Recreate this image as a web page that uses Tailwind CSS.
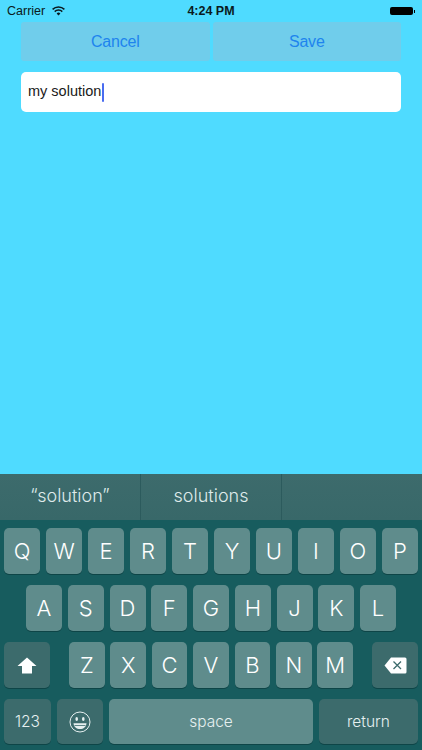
<!DOCTYPE html>
<html lang="en">
<head>
    <meta charset="UTF-8">
    <meta name="viewport" content="width=device-width, initial-scale=1.0">
    <title>Edit solution</title>
    <script src="https://cdn.jsdelivr.net/npm/@tailwindcss/browser@4"></script>
</head>
<body class="bg-[#4fdbff] font-['Liberation_Sans',sans-serif] overflow-hidden">
    <div class="w-[422px] h-[750px] flex flex-col">

        <!-- status bar -->
        <div class="flex items-center h-[22px] pl-[7px] pr-[7px] text-[12.5px] text-[#0a1a20]">
            <div class="flex-1 flex items-center gap-[7px]">
                <span>Carrier</span>
                <svg class="w-[13px] h-[10px]" viewBox="0 0 13 10">
                    <path d="M0.6 3.4a8.4 8.4 0 0 1 11.8 0" fill="none" stroke="#0a1a20" stroke-width="1.5"/>
                    <path d="M2.7 5.6a5.4 5.4 0 0 1 7.6 0" fill="none" stroke="#0a1a20" stroke-width="1.5"/>
                    <path d="M4.6 7.5a2.7 2.7 0 0 1 3.8 0L6.5 9.6z" fill="#0a1a20"/>
                </svg>
            </div>
            <span class="font-bold">4:24 PM</span>
            <div class="flex-1 flex justify-end items-center">
                <div class="w-[23px] h-[8px] bg-black rounded-[2px]"></div>
                <div class="w-[1.5px] h-[3px] bg-black ml-[0.5px]"></div>
            </div>
        </div>

        <!-- buttons -->
        <div class="flex gap-[3px] px-[21px] h-[39px]">
            <button class="flex-1 bg-[#70cdeb] rounded-[3px] text-[16px] tracking-[-0.2px] text-[#1e84ee]">Cancel</button>
            <button class="flex-1 bg-[#70cdeb] rounded-[3px] text-[16px] tracking-[-0.2px] text-[#1e84ee]">Save</button>
        </div>

        <!-- input -->
        <div class="mx-[21px] mt-[11px] h-[40px] bg-white rounded-[5px] pl-[7px] flex items-center text-[14.5px] text-[#1a1a1a]">
            <span>my solution</span>
            <span class="w-[2px] h-[19px] ml-[1px] bg-[#4a6cf0] rounded-[1px]"></span>
        </div>

        <div class="flex-1"></div>

        <!-- keyboard -->
        <div class="h-[276px] bg-[#175c5e] flex flex-col text-white font-['Inter',sans-serif] font-light">
            <div class="h-[46px] bg-gradient-to-b from-[#3d6b6c] to-[#386869] flex text-[18px] text-[#dfeaea]">
                <div class="w-[141px] flex items-center justify-center border-r border-[#2c5b5d] pb-[3px]">“solution”</div>
                <div class="w-[141px] flex items-center justify-center border-r border-[#2c5b5d] pb-[3px]">solutions</div>
                <div class="flex-1"></div>
            </div>

            <div class="flex gap-[5.7px] px-[4px] mt-[8px] h-[46px] text-[22px]">
                <div class="flex-1 rounded-[5px] bg-[#5f8c8c] shadow-[0_1px_0_#0e4547] flex items-center justify-center">Q</div>
                <div class="flex-1 rounded-[5px] bg-[#5f8c8c] shadow-[0_1px_0_#0e4547] flex items-center justify-center">W</div>
                <div class="flex-1 rounded-[5px] bg-[#5f8c8c] shadow-[0_1px_0_#0e4547] flex items-center justify-center">E</div>
                <div class="flex-1 rounded-[5px] bg-[#5f8c8c] shadow-[0_1px_0_#0e4547] flex items-center justify-center">R</div>
                <div class="flex-1 rounded-[5px] bg-[#5f8c8c] shadow-[0_1px_0_#0e4547] flex items-center justify-center">T</div>
                <div class="flex-1 rounded-[5px] bg-[#5f8c8c] shadow-[0_1px_0_#0e4547] flex items-center justify-center">Y</div>
                <div class="flex-1 rounded-[5px] bg-[#5f8c8c] shadow-[0_1px_0_#0e4547] flex items-center justify-center">U</div>
                <div class="flex-1 rounded-[5px] bg-[#5f8c8c] shadow-[0_1px_0_#0e4547] flex items-center justify-center">I</div>
                <div class="flex-1 rounded-[5px] bg-[#5f8c8c] shadow-[0_1px_0_#0e4547] flex items-center justify-center">O</div>
                <div class="flex-1 rounded-[5px] bg-[#5f8c8c] shadow-[0_1px_0_#0e4547] flex items-center justify-center">P</div>
            </div>

            <div class="flex gap-[5.7px] px-[26px] mt-[11px] h-[46px] text-[22px]">
                <div class="flex-1 rounded-[5px] bg-[#5f8c8c] shadow-[0_1px_0_#0e4547] flex items-center justify-center">A</div>
                <div class="flex-1 rounded-[5px] bg-[#5f8c8c] shadow-[0_1px_0_#0e4547] flex items-center justify-center">S</div>
                <div class="flex-1 rounded-[5px] bg-[#5f8c8c] shadow-[0_1px_0_#0e4547] flex items-center justify-center">D</div>
                <div class="flex-1 rounded-[5px] bg-[#5f8c8c] shadow-[0_1px_0_#0e4547] flex items-center justify-center">F</div>
                <div class="flex-1 rounded-[5px] bg-[#5f8c8c] shadow-[0_1px_0_#0e4547] flex items-center justify-center">G</div>
                <div class="flex-1 rounded-[5px] bg-[#5f8c8c] shadow-[0_1px_0_#0e4547] flex items-center justify-center">H</div>
                <div class="flex-1 rounded-[5px] bg-[#5f8c8c] shadow-[0_1px_0_#0e4547] flex items-center justify-center">J</div>
                <div class="flex-1 rounded-[5px] bg-[#5f8c8c] shadow-[0_1px_0_#0e4547] flex items-center justify-center">K</div>
                <div class="flex-1 rounded-[5px] bg-[#5f8c8c] shadow-[0_1px_0_#0e4547] flex items-center justify-center">L</div>
            </div>

            <div class="flex px-[4px] mt-[11px] h-[46px] text-[22px]">
                <div class="w-[46px] rounded-[5px] bg-[#3c6b6c] shadow-[0_1px_0_#0e4547] flex items-center justify-center">
                    <svg class="w-[20px] h-[17px]" viewBox="0 0 20 17"><path d="M10 0.5L19.500 9H15V16.500H5V9H0.500z" fill="#fff"/></svg>
                </div>
                <div class="flex-1 flex gap-[5.7px] px-[19px]">
                    <div class="flex-1 rounded-[5px] bg-[#5f8c8c] shadow-[0_1px_0_#0e4547] flex items-center justify-center">Z</div>
                    <div class="flex-1 rounded-[5px] bg-[#5f8c8c] shadow-[0_1px_0_#0e4547] flex items-center justify-center">X</div>
                    <div class="flex-1 rounded-[5px] bg-[#5f8c8c] shadow-[0_1px_0_#0e4547] flex items-center justify-center">C</div>
                    <div class="flex-1 rounded-[5px] bg-[#5f8c8c] shadow-[0_1px_0_#0e4547] flex items-center justify-center">V</div>
                    <div class="flex-1 rounded-[5px] bg-[#5f8c8c] shadow-[0_1px_0_#0e4547] flex items-center justify-center">B</div>
                    <div class="flex-1 rounded-[5px] bg-[#5f8c8c] shadow-[0_1px_0_#0e4547] flex items-center justify-center">N</div>
                    <div class="flex-1 rounded-[5px] bg-[#5f8c8c] shadow-[0_1px_0_#0e4547] flex items-center justify-center">M</div>
                </div>
                <div class="w-[46px] rounded-[5px] bg-[#3c6b6c] shadow-[0_1px_0_#0e4547] flex items-center justify-center">
                    <svg class="w-[23px] h-[17px]" viewBox="0 0 23 17">
                        <path d="M7 0.5H21a1.500 1.500 0 0 1 1.500 1.500V15a1.500 1.500 0 0 1-1.500 1.500H7L0.500 8.500z" fill="#fff"/>
                        <path d="M9.500 4.500L17 12M17 4.500L9.500 12" stroke="#3c6b6c" stroke-width="1.300"/>
                    </svg>
                </div>
            </div>

            <div class="flex gap-[6px] px-[4px] mt-[11px] h-[45px] text-[15.5px] text-[#e6f0f0]">
                <div class="w-[47px] rounded-[5px] bg-[#3c6b6c] shadow-[0_1px_0_#0e4547] flex items-center justify-center">123</div>
                <div class="w-[46px] rounded-[5px] bg-[#3c6b6c] shadow-[0_1px_0_#0e4547] flex items-center justify-center">
                    <svg class="w-[22px] h-[22px]" viewBox="0 0 22 22">
                        <circle cx="11" cy="11" r="10" fill="none" stroke="#e6f0f0" stroke-width="1"/>
                        <ellipse cx="7.700" cy="8" rx="1.300" ry="2" fill="#e6f0f0"/>
                        <ellipse cx="14.300" cy="8" rx="1.300" ry="2" fill="#e6f0f0"/>
                        <path d="M4.500 12.200H17.500C17.200 15.800 14.500 18 11 18S4.800 15.800 4.500 12.200z" fill="#e6f0f0"/>
                        <path d="M5.500 14.500H16.500" stroke="#3c6b6c" stroke-width="0.800"/>
                    </svg>
                </div>
                <div class="flex-1 rounded-[5px] bg-[#5f8c8c] shadow-[0_1px_0_#0e4547] flex items-center justify-center">space</div>
                <div class="w-[99px] rounded-[5px] bg-[#3c6b6c] shadow-[0_1px_0_#0e4547] flex items-center justify-center">return</div>
            </div>
        </div>
    </div>
</body>
</html>
